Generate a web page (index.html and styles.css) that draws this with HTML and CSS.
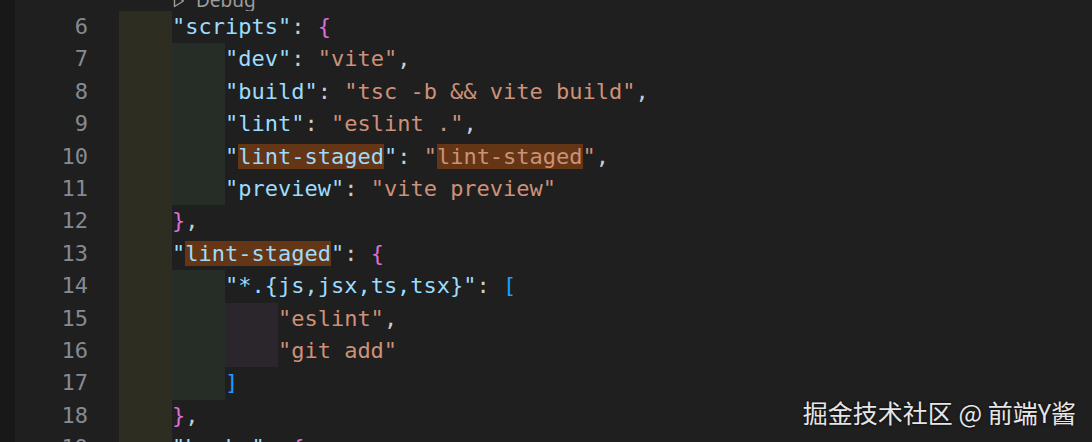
FILE: index.html
```html
<!DOCTYPE html>
<html>
<head>
<meta charset="utf-8">
<link rel="stylesheet" href="styles.css">
</head>
<body>
<div class="editor">
  <div class="lens-row">
    <span class="lens-pad"></span>
    <span class="lens"><svg class="play" width="12" height="14" viewBox="0 0 12 14"><path d="M1.5 1.5 L10.5 7 L1.5 12.5 Z" fill="none" stroke="#9d9d9d" stroke-width="1.4" stroke-linejoin="round"/></svg>Debug</span>
  </div>
  <div class="line"><span class="ln">6</span><span class="code"><span class="g g1"></span><span class="k">"scripts"</span><span class="p">: </span><span class="b1">{</span></span></div>
  <div class="line"><span class="ln">7</span><span class="code"><span class="g g1"></span><span class="g g2"></span><span class="k">"dev"</span><span class="p">: </span><span class="s">"vite"</span><span class="p">,</span></span></div>
  <div class="line"><span class="ln">8</span><span class="code"><span class="g g1"></span><span class="g g2"></span><span class="k">"build"</span><span class="p">: </span><span class="s">"tsc -b &amp;&amp; vite build"</span><span class="p">,</span></span></div>
  <div class="line"><span class="ln">9</span><span class="code"><span class="g g1"></span><span class="g g2"></span><span class="k">"lint"</span><span class="p">: </span><span class="s">"eslint ."</span><span class="p">,</span></span></div>
  <div class="line"><span class="ln">10</span><span class="code"><span class="g g1"></span><span class="g g2"></span><span class="k">"<span class="hl">lint-staged</span>"</span><span class="p">: </span><span class="s">"<span class="hl">lint-staged</span>"</span><span class="p">,</span></span></div>
  <div class="line"><span class="ln">11</span><span class="code"><span class="g g1"></span><span class="g g2"></span><span class="k">"preview"</span><span class="p">: </span><span class="s">"vite preview"</span></span></div>
  <div class="line"><span class="ln">12</span><span class="code"><span class="g g1"></span><span class="b1">}</span><span class="p">,</span></span></div>
  <div class="line"><span class="ln">13</span><span class="code"><span class="g g1"></span><span class="k">"<span class="hl">lint-staged</span>"</span><span class="p">: </span><span class="b1">{</span></span></div>
  <div class="line"><span class="ln">14</span><span class="code"><span class="g g1"></span><span class="g g2"></span><span class="k">"*.{js,jsx,ts,tsx}"</span><span class="p">: </span><span class="b2">[</span></span></div>
  <div class="line"><span class="ln">15</span><span class="code"><span class="g g1"></span><span class="g g2"></span><span class="g g3"></span><span class="s">"eslint"</span><span class="p">,</span></span></div>
  <div class="line"><span class="ln">16</span><span class="code"><span class="g g1"></span><span class="g g2"></span><span class="g g3"></span><span class="s">"git add"</span></span></div>
  <div class="line"><span class="ln">17</span><span class="code"><span class="g g1"></span><span class="g g2"></span><span class="b2">]</span></span></div>
  <div class="line"><span class="ln">18</span><span class="code"><span class="g g1"></span><span class="b1">}</span><span class="p">,</span></span></div>
  <div class="line"><span class="ln">19</span><span class="code"><span class="g g1"></span><span class="k">"husky"</span><span class="p">: </span><span class="b1">{</span></span></div>
</div>
<div class="watermark">掘金技术社区 @ 前端Y酱</div>
</body>
</html>
```
FILE: styles.css
```css
html, body {
  margin: 0;
  padding: 0;
  width: 1092px;
  height: 442px;
  overflow: hidden;
  background: #1f1f1f;
}
body {
  position: relative;
  background: linear-gradient(to right, #181818 0, #181818 15px, #1f1f1f 15px);
}
.editor {
  font-family: "DejaVu Sans Mono", monospace;
  font-size: 22px;
  color: #cccccc;
}
.lens-row {
  display: flex;
  height: 11px;
  overflow: hidden;
  align-items: flex-end;
}
.lens-pad {
  width: 173px;
  flex: none;
}
.lens {
  font-family: "Noto Sans", sans-serif;
  font-size: 19px;
  line-height: 19px;
  color: #9d9d9d;
  display: flex;
  align-items: center;
  gap: 11px;
  margin-bottom: 1px;
  white-space: nowrap;
}
.play {
  flex: none;
}
.line {
  display: flex;
  height: 32.4px;
  line-height: 32.4px;
  white-space: pre;
}
.ln {
  width: 88px;
  padding-right: 31px;
  text-align: right;
  color: #858a93;
  flex: none;
}
.code {
  display: block;
}
.g {
  display: inline-block;
  width: 4ch;
  height: 32.4px;
  vertical-align: top;
}
.g1 { background: #2e2d21; }
.g2 { background: #262c26; }
.g3 { background: #2b262b; }
.k { color: #9cdcfe; }
.s { color: #ce9178; }
.p { color: #cccccc; }
.b1 { color: #da70d6; }
.b2 { color: #179fff; }
.hl {
  background: #643615;
}
.watermark {
  position: absolute;
  right: 16px;
  bottom: 15px;
  font-family: "Noto Sans CJK SC", "Noto Sans", sans-serif;
  font-size: 25px;
  line-height: 30px;
  color: #e6e6e6;
  text-shadow: 0 0 3px rgba(0,0,0,0.8);
  white-space: nowrap;
}
```
